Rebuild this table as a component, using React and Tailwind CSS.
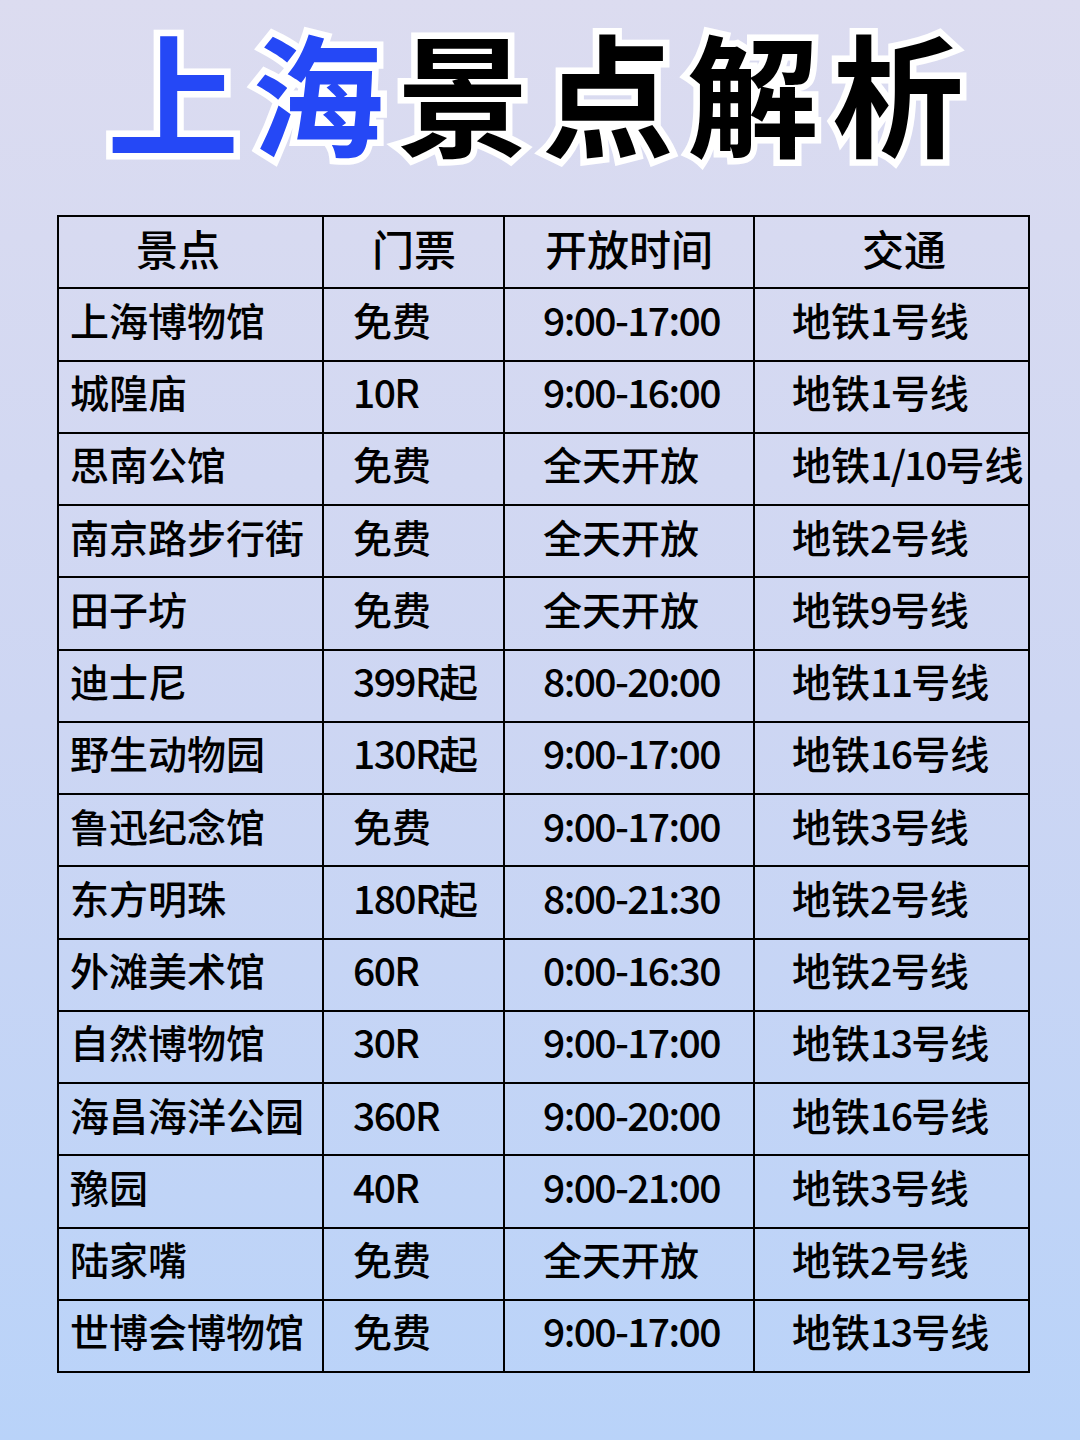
import React from "react";

const rows = [
  ["上海博物馆", "免费", "9:00-17:00", "地铁1号线"],
  ["城隍庙", "10R", "9:00-16:00", "地铁1号线"],
  ["思南公馆", "免费", "全天开放", "地铁1/10号线"],
  ["南京路步行街", "免费", "全天开放", "地铁2号线"],
  ["田子坊", "免费", "全天开放", "地铁9号线"],
  ["迪士尼", "399R起", "8:00-20:00", "地铁11号线"],
  ["野生动物园", "130R起", "9:00-17:00", "地铁16号线"],
  ["鲁迅纪念馆", "免费", "9:00-17:00", "地铁3号线"],
  ["东方明珠", "180R起", "8:00-21:30", "地铁2号线"],
  ["外滩美术馆", "60R", "0:00-16:30", "地铁2号线"],
  ["自然博物馆", "30R", "9:00-17:00", "地铁13号线"],
  ["海昌海洋公园", "360R", "9:00-20:00", "地铁16号线"],
  ["豫园", "40R", "9:00-21:00", "地铁3号线"],
  ["陆家嘴", "免费", "全天开放", "地铁2号线"],
  ["世博会博物馆", "免费", "9:00-17:00", "地铁13号线"],
];

function Mixed({ text }) {
  const parts = text.match(/[\x00-\x7F]+|[^\x00-\x7F]+/g) || [];
  return (
    <>
      {parts.map((p, i) =>
        /^[\x00-\x7F]+$/.test(p) ? (
          <span key={i} className="tracking-[-1.6px]">
            {p}
          </span>
        ) : (
          <span key={i}>{p}</span>
        )
      )}
    </>
  );
}

const colW = ["w-[265px]", "w-[181px]", "w-[250px]", "w-[275px]"];
const colPad = ["pl-[11px]", "pl-[29px]", "pl-[38px]", "pl-[37px]"];
const headPad = ["pl-[77px]", "pl-[48px]", "pl-[40px]", "pl-[107px]"];

export default function App() {
  return (
    <div
      className="w-[1080px] h-[1440px] bg-gradient-to-b from-[#dcdcf0] via-[#cdd6f3] to-[#b9d3f9] flex flex-col overflow-hidden"
      style={{ fontFamily: '"Noto Sans CJK SC", "Noto Sans", sans-serif' }}
    >
      <h1 className="mt-[20px] self-center text-[132px] leading-[140px] font-bold tracking-[13px] pl-[4px] whitespace-nowrap [-webkit-text-stroke:13px_white] [paint-order:stroke_fill]">
        <span className="text-[#2548f6]">上海</span>
        <span className="text-black">景点解析</span>
      </h1>

      <div className="mt-[55px] ml-[57px] self-start border-t-2 border-l-2 border-black text-black text-[39px] font-medium leading-none">
        <div className="flex h-[72.25px] border-b-2 border-black text-[42px]">
          {["景点", "门票", "开放时间", "交通"].map((h, i) => (
            <div
              key={i}
              className={`${colW[i]} ${headPad[i]} h-full pb-[8px] flex items-center border-r-2 border-black`}
            >
              {h}
            </div>
          ))}
        </div>
        {rows.map((r, ri) => (
          <div key={ri} className="flex h-[72.25px] border-b-2 border-black">
            {r.map((c, i) => (
              <div
                key={i}
                className={`${colW[i]} ${colPad[i]} h-full pb-[10px] flex items-center border-r-2 border-black whitespace-nowrap overflow-visible`}
              >
                <Mixed text={c} />
              </div>
            ))}
          </div>
        ))}
      </div>
    </div>
  );
}
